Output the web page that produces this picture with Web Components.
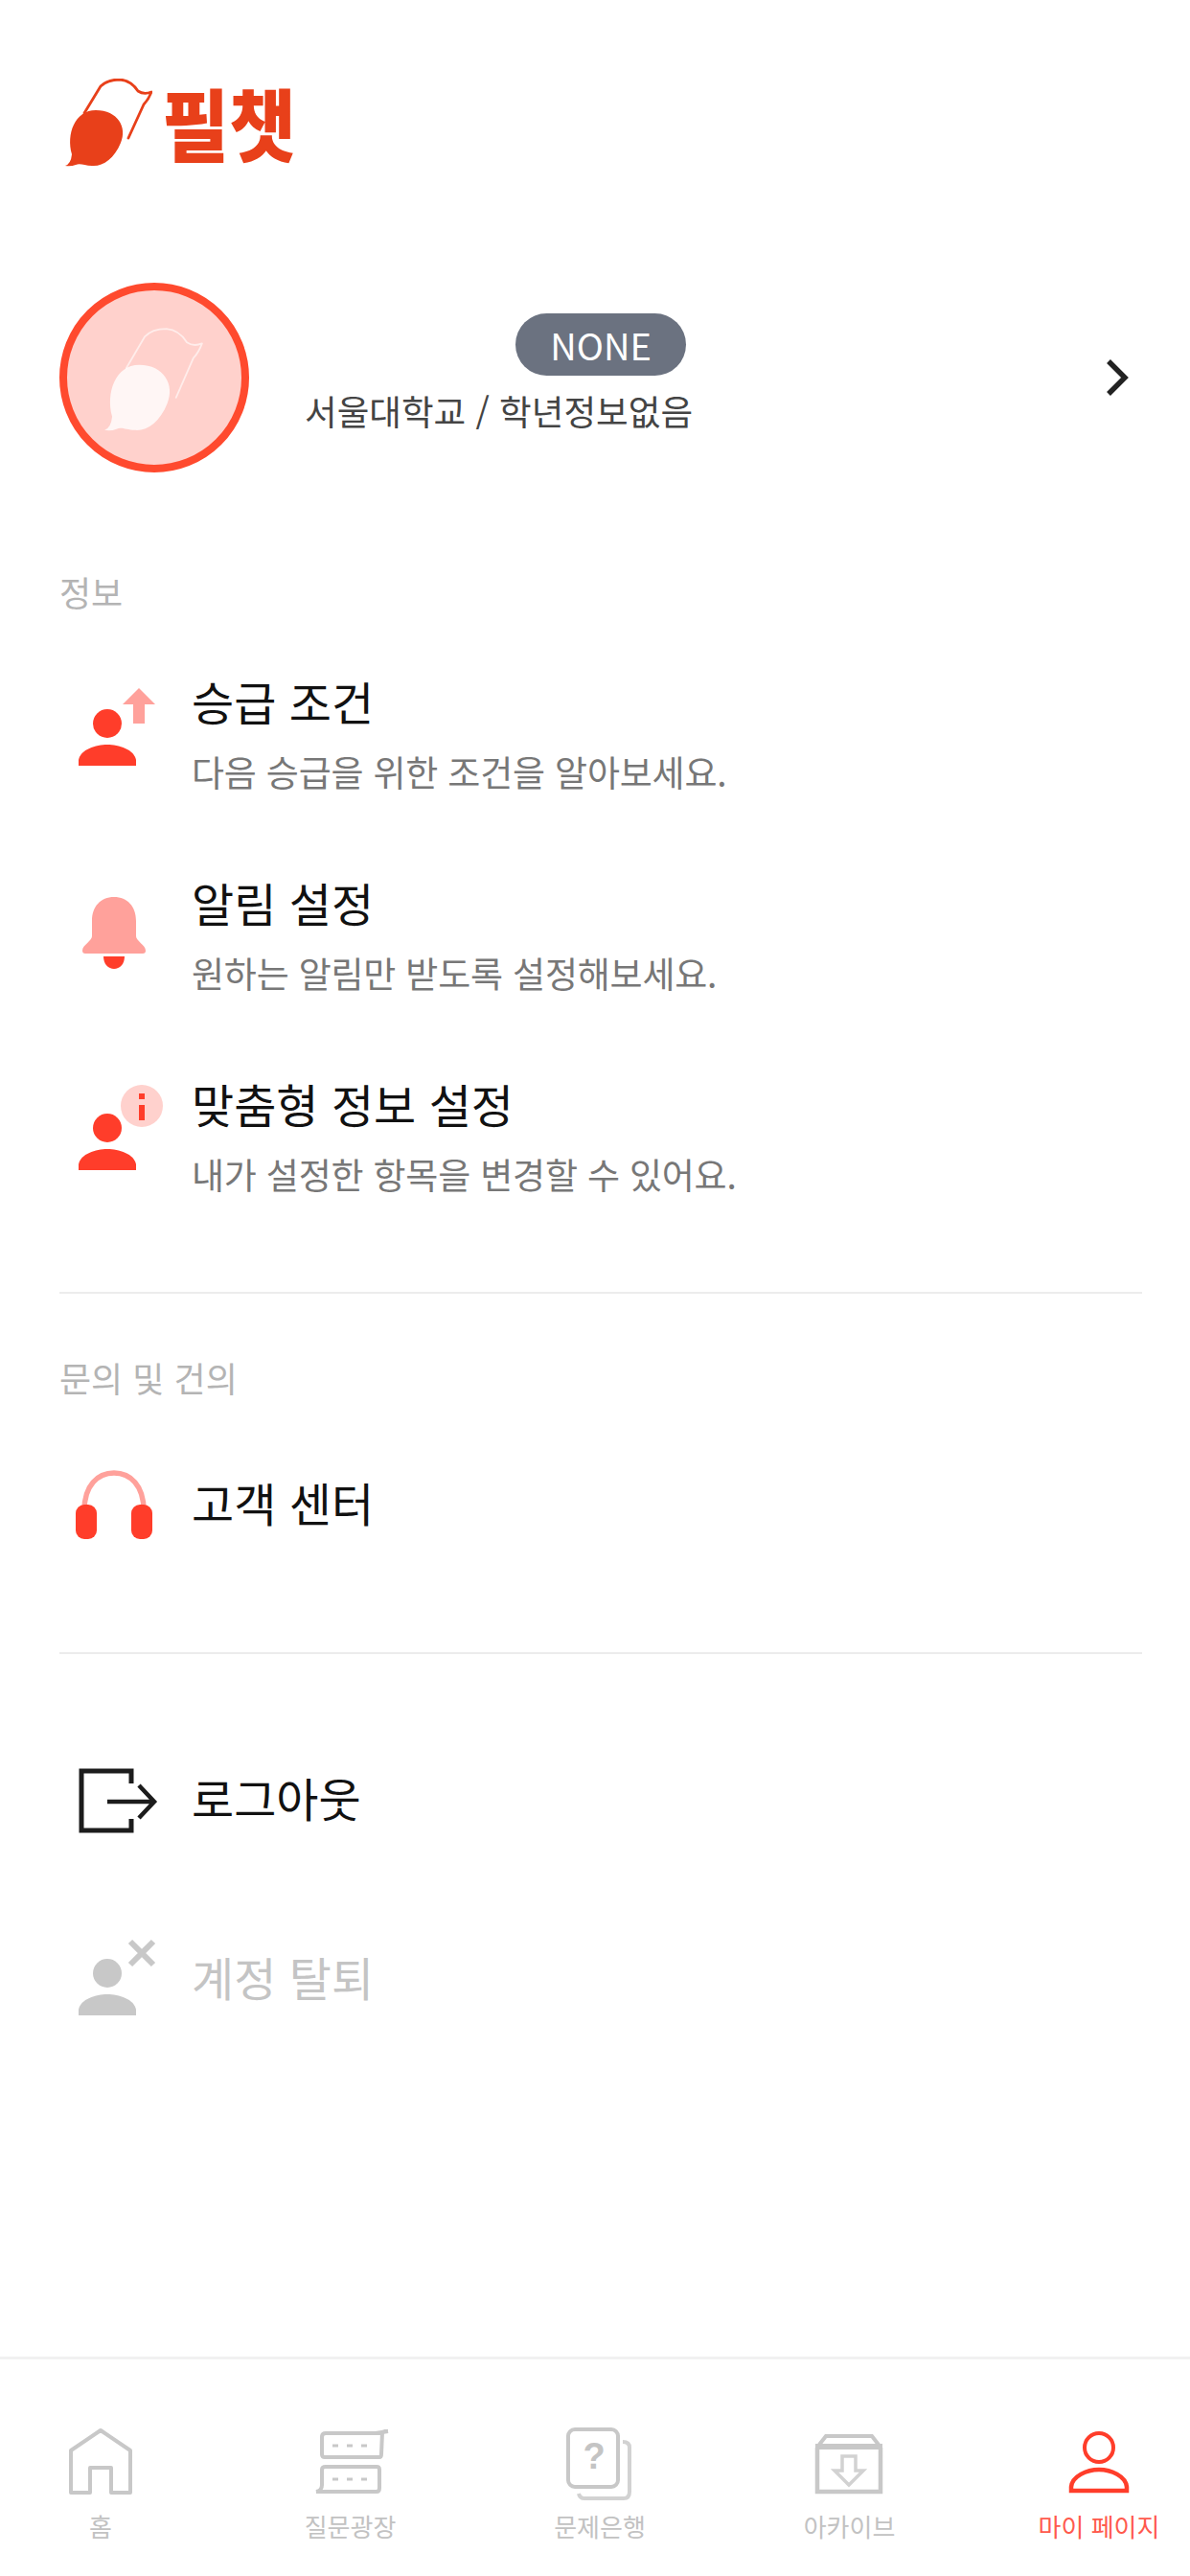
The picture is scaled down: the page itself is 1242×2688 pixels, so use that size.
<!DOCTYPE html>
<html lang="ko">
<head>
<meta charset="utf-8">
<title>필챗</title>
<style>
html,body{margin:0;padding:0;background:#fff}
body{font-family:"Noto Sans CJK KR","Noto Sans",sans-serif;width:1242px;height:2688px;overflow:hidden}
</style>
</head>
<body>
<my-page>
  <pc-header slot="header"></pc-header>
  <pc-profile slot="profile" level="NONE">서울대학교 / 학년정보없음</pc-profile>

  <menu-section label="정보" style="--top:101px;--bottom:55px">
    <menu-row icon="up" h="210"><span slot="title">승급 조건</span><span slot="sub">다음 승급을 위한 조건을 알아보세요.</span></menu-row>
    <menu-row icon="bell" h="210"><span slot="title">알림 설정</span><span slot="sub">원하는 알림만 받도록 설정해보세요.</span></menu-row>
    <menu-row icon="info" h="210"><span slot="title">맞춤형 정보 설정</span><span slot="sub">내가 설정한 항목을 변경할 수 있어요.</span></menu-row>
  </menu-section>
  <menu-divider></menu-divider>
  <menu-section label="문의 및 건의" style="--top:64px;--bottom:94px;--gap:50px">
    <menu-row icon="headset" h="120"><span slot="title">고객 센터</span></menu-row>
  </menu-section>
  <menu-divider></menu-divider>
  <menu-section style="--top:92px;--bottom:0px">
    <menu-row icon="logout" h="120" style="margin-bottom:67px"><span slot="title">로그아웃</span></menu-row>
    <menu-row icon="leave" h="120" muted><span slot="title">계정 탈퇴</span></menu-row>
  </menu-section>

  <bottom-nav slot="nav">
    <nav-item icon="home">홈</nav-item>
    <nav-item icon="square">질문광장</nav-item>
    <nav-item icon="bank">문제은행</nav-item>
    <nav-item icon="archive">아카이브</nav-item>
    <nav-item icon="me" active>마이 페이지</nav-item>
  </bottom-nav>
</my-page>

<script>
const FONT='"Noto Sans CJK KR","Noto Sans",sans-serif';
const RED='#ff3d2a', PINK='#ffa19b', GREY='#c8c8c8';
const BIRD=(solid,line,lw,so)=>`
  <path d="M21 36 L38 8 Q45 1 58 1 Q70 2 77 13 Q83 17 91 14 Q88 22 83 27 L67 62" fill="none" stroke="${line}" stroke-width="${lw}" stroke-linecap="round" stroke-linejoin="round"/>
  <path d="M1 91 Q7 89 8 79 C2 58 11 33 33 33 C56 33 66 51 59 67 C52 84 40 92 29 91 C21 91 17 88 12 90 Q7 92 1 91Z" fill="${solid}" fill-opacity="${so}"/>`;

const person=(y,c)=>`<circle cx="42" cy="${y}" r="15" fill="${c}"/><path d="M12 ${y+44} V${y+38} C14 ${y+27} 30 ${y+22} 42 ${y+22} C54 ${y+22} 70 ${y+27} 72 ${y+38} V${y+44} Z" fill="${c}"/>`;

const ICONS={
  up:`<svg width="100" height="100" viewBox="0 0 100 100">${person(37,RED)}<path d="M75 0 L92 17 H81 V37 H69 V17 H58 Z" fill="${PINK}"/></svg>`,
  bell:`<svg width="100" height="100" viewBox="0 0 100 100"><path d="M49 8 C35 8 26 18 26 33 V49 C26 54 16 58 16 64 Q16 67 19 67 H79 Q82 67 82 64 C82 58 72 54 72 49 V33 C72 18 63 8 49 8Z" fill="${PINK}"/><path d="M38 70 H60 C60 78 55 83 49 83 C43 83 38 78 38 70Z" fill="${RED}"/></svg>`,
  info:`<svg width="100" height="100" viewBox="0 0 100 100">${person(39,RED)}<circle cx="78" cy="16" r="22" fill="#ffd1cd"/><rect x="75" y="3" width="6" height="6" fill="${RED}"/><rect x="75" y="15" width="6" height="16" fill="${RED}"/></svg>`,
  headset:`<svg width="100" height="100" viewBox="0 0 100 100"><path d="M18 56 C18 30 32 17 49 17 C66 17 80 30 80 56" fill="none" stroke="${PINK}" stroke-width="5.5"/><rect x="9" y="50" width="22" height="36" rx="9" fill="${RED}"/><rect x="67" y="50" width="22" height="36" rx="9" fill="${RED}"/></svg>`,
  logout:`<svg width="100" height="100" viewBox="0 0 100 100" fill="none" stroke="#1c1c1c" stroke-width="5"><path d="M67 33 V20 H15 V82 H67 V70"/><path d="M42 52 H88 M75 35 L91 52 L75 69" stroke-width="4.5"/></svg>`,
  leave:`<svg width="100" height="100" viewBox="0 0 100 100">${person(44,GREY)}<path d="M66 11 L90 35 M90 11 L66 35" stroke="${GREY}" stroke-width="6"/></svg>`,
  home:`<svg width="80" height="76" viewBox="0 0 80 76" fill="none" stroke="${GREY}" stroke-width="4"><path d="M9 68 V24 L40 3 L71 24 V68 H51 V42 H29 V68 Z" stroke-linejoin="round"/></svg>`,
  square:`<svg width="80" height="76" viewBox="0 0 80 76" fill="none" stroke="${GREY}"><path d="M13 31 H70 Q72 31 72 28 L73 5 L79 4 L66 6 H14 Q10 6 10 10 V28 Q10 31 13 31 Z" stroke-width="4"/><path d="M14 41 H67 Q70 41 70 44 V63 Q70 67 67 67 H4 Q10 66 10 60 V44 Q10 41 14 41Z" stroke-width="4"/><g stroke-width="3" stroke-dasharray="6 9"><path d="M21 19 H60"/><path d="M21 54 H60"/></g></svg>`,
  bank:`<svg width="80" height="76" viewBox="0 0 80 76" fill="none" stroke="${GREY}" stroke-width="4"><rect x="7" y="2" width="52" height="60" rx="7"/><path d="M64 15 Q71 15 71 21 V67 Q71 74 65 74 H24 Q19 74 18 69" stroke="#d2d2d2"/></svg>`,
  archive:`<svg width="80" height="76" viewBox="0 0 80 76" fill="none" stroke="${GREY}"><path d="M6 21 V67 H72 V21" stroke-width="4.5"/><path d="M4 20 H74" stroke-width="6"/><path d="M8 18 L15 9 H63 L70 18" stroke-width="4" /><path d="M32 30 H46 V45 H54 L39 60 L24 45 H32 Z" stroke-width="3.5" stroke="#d2d2d2"/></svg>`,
  me:`<svg width="80" height="76" viewBox="0 0 80 76" fill="none" stroke="${RED}" stroke-width="4"><circle cx="40" cy="21" r="15"/><path d="M11 66 V62 C12 51 27 44 40 44 C53 44 68 51 69 62 V66 Z" stroke-width="4.5"/></svg>`
};

function define(name,html){
  customElements.define(name,class extends HTMLElement{
    constructor(){super();const s=this.attachShadow({mode:'open'});s.innerHTML=typeof html==='function'?html(this):html;}
  });
}

define('my-page',`<style>
:host{display:flex;flex-direction:column;width:1242px;height:2688px;font-family:${FONT};background:#fff}
.nav{margin-top:auto;display:block}
</style><slot name="header"></slot><slot name="profile"></slot><slot></slot><div class="nav"><slot name="nav"></slot></div>`);

define('pc-header',`<style>
:host{display:flex;align-items:center;box-sizing:border-box;height:212px;padding:83px 0 39px 67px}
svg{display:block;flex:none}
.word{display:block;font:900 76px/90px ${FONT};color:#e8401a;letter-spacing:0;transform:scaleY(1.08);margin:-5px 0 0 10px;white-space:nowrap}
</style><svg width="92" height="92" viewBox="0 0 92 92">${BIRD('#e8401a','#e8401a',2.8,1)}</svg><span class="word">필챗</span>`);

define('pc-profile',h=>`<style>
:host{display:flex;align-items:center;box-sizing:border-box;height:198px;margin-top:83px;padding:0 64px 0 62px}
.av{flex:none;box-sizing:border-box;width:198px;height:198px;border-radius:50%;border:8px solid #ff4a2e;background:#ffd1cc;display:flex;align-items:center;justify-content:center}
.av svg{display:block;margin:0 0 -4px -2px}
.info{display:flex;flex-direction:column;margin-left:58px;width:404px;height:134px}
.pill{align-self:flex-end;margin-right:6px;box-sizing:border-box;width:178px;height:65px;border-radius:33px;background:#6b7280;color:#fff;font-size:38px;line-height:65px;text-align:center}
.sub{margin-top:14px;font-size:36.6px;line-height:45px;color:#444;white-space:nowrap}
.chev{margin-left:auto;display:block}
</style><div class="av"><svg width="104" height="108" viewBox="0 0 92 92" preserveAspectRatio="none">${BIRD('#fff','#fff',1.6,.8).replace('stroke="#fff"','stroke="#fff" stroke-opacity=".6"')}</svg></div>
<div class="info"><div class="pill">${h.getAttribute('level')}</div><div class="sub"><slot></slot></div></div>
<svg class="chev" width="24" height="38" viewBox="0 0 24 38" fill="none" stroke="#222" stroke-width="5.5"><path d="M3 2 L20 19 L3 36"/></svg>`);

define('menu-section',h=>`<style>
:host{display:block;padding:var(--top,0) 0 var(--bottom,0)}
.l{display:${h.hasAttribute('label')?'block':'none'};margin:0 0 var(--gap,23px) 62px;font-size:36px;line-height:46px;color:#b4b4b4;white-space:nowrap}
</style><div class="l">${h.getAttribute('label')||''}</div><slot></slot>`);

define('menu-divider',`<style>:host{display:block;height:2px;margin:0 50px 0 62px;background:#ececec}</style>`);

define('menu-row',h=>`<style>
:host{display:flex;align-items:center;box-sizing:border-box;height:${h.getAttribute('h')}px;padding-left:70px}
.i{flex:none;width:100px;height:100px;margin-right:30px}
.i svg{display:block;overflow:visible}
.t{display:flex;flex-direction:column;white-space:nowrap;padding-bottom:6px}
.title{font-size:48px;line-height:62px;color:${h.hasAttribute('muted')?'#c4c4c4':'#111'}}
.sub{font-size:37px;line-height:50px;color:#777;margin-top:18px;letter-spacing:-.2px}
</style><div class="i">${ICONS[h.getAttribute('icon')]}</div><div class="t"><div class="title"><slot name="title"></slot></div>${h.querySelector('[slot=sub]')?'<div class="sub"><slot name="sub"></slot></div>':''}</div>`);

define('bottom-nav',`<style>
:host{display:flex;justify-content:space-between;box-sizing:border-box;height:229px;border-top:3px solid #f1f1f1;padding:71px 23px 0 33px}
</style><slot></slot>`);

define('nav-item',h=>`<style>
:host{display:flex;flex-direction:column;align-items:center;width:144px;position:relative}
svg{display:block}
.q{position:absolute;left:46px;top:10px;width:40px;text-align:center;font:700 38px/40px "Liberation Sans",sans-serif;color:#c4c4c4}
.l{margin-top:9px;font-size:26px;line-height:36px;white-space:nowrap;color:${h.hasAttribute('active')?'#ff5a4d':'#c2c2c2'}}
</style>${ICONS[h.getAttribute('icon')]}${h.getAttribute('icon')==='bank'?'<span class="q">?</span>':''}<div class="l"><slot></slot></div>`);
</script>
</body>
</html>
